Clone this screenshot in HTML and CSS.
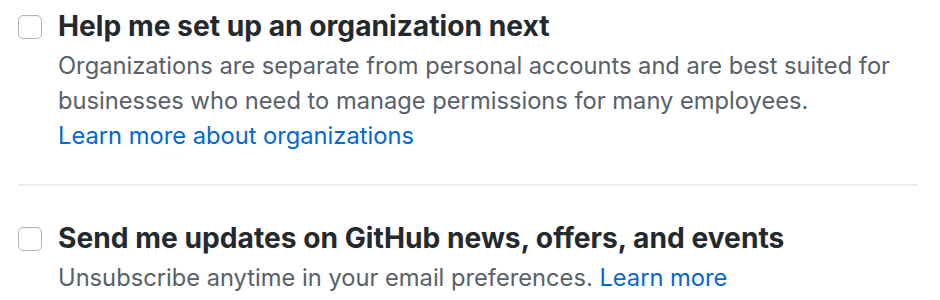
FILE: index.html
```html
<!DOCTYPE html>
<html lang="en">
<head>
    <meta charset="UTF-8">
    <title>Email preferences</title>
    <link rel="stylesheet" href="styles.css">
</head>
<body>
    <div class="prefs">
        <div class="pref-item">
            <input type="checkbox" class="pref-check" id="orgSetup">
            <div class="pref-body">
                <label for="orgSetup" class="pref-title">Help me set up an organization next</label>
                <p class="pref-note">
                    Organizations are separate from personal accounts and are best suited for
                    businesses who need to manage permissions for many employees.<br>
                    <a href="#">Learn more about organizations</a>
                </p>
            </div>
        </div>

        <div class="pref-item">
            <input type="checkbox" class="pref-check" id="newsUpdates">
            <div class="pref-body">
                <label for="newsUpdates" class="pref-title">Send me updates on GitHub news, offers, and events</label>
                <p class="pref-note">
                    Unsubscribe anytime in your email preferences. <a href="#">Learn more</a>
                </p>
            </div>
        </div>
    </div>
</body>
</html>
```

FILE: styles.css
```css
body {
    margin: 0;
    font-family: Inter, "Liberation Sans", sans-serif;
    background: #fff;
}
.prefs {
    width: 900px;
    padding: 8px 0 0 18px;
}
.pref-item {
    display: flex;
    gap: 16px;
    padding-bottom: 31px;
}
.pref-item + .pref-item {
    border-top: 2px solid #eaecef;
    padding-top: 34px;
    padding-bottom: 0;
}
.pref-check {
    appearance: none;
    flex: none;
    width: 24px;
    height: 24px;
    margin: 7px 0 0;
    border: 1px solid #b5b5b5;
    border-radius: 5px;
    background: #fff;
    box-shadow: inset 0 1px 1px rgba(0, 0, 0, 0.05);
}
.pref-body {
    flex: 1;
}
.pref-title {
    display: block;
    font-size: 28.2px;
    font-weight: 700;
    line-height: 36px;
    color: #24292e;
}
.pref-note {
    margin: 4px 0 0;
    font-size: 23.7px;
    line-height: 35px;
    color: #586069;
}
.pref-note a {
    color: #0366d6;
    text-decoration: none;
}
```
